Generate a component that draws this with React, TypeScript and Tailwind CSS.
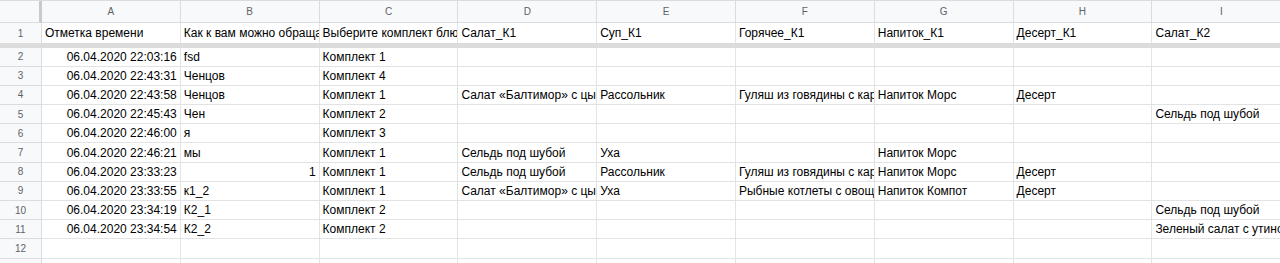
const columns = ['A', 'B', 'C', 'D', 'E', 'F', 'G', 'H', 'I'];

type Cell = string | { v: string; right?: boolean };

const header: Cell[] = [
  'Отметка времени',
  'Как к вам можно обращаться?',
  'Выберите комплект блюд',
  'Салат_К1',
  'Суп_К1',
  'Горячее_К1',
  'Напиток_К1',
  'Десерт_К1',
  'Салат_К2',
];

const ts = (v: string) => ({ v, right: true });

const rows: Cell[][] = [
  [ts('06.04.2020 22:03:16'), 'fsd', 'Комплект 1'],
  [ts('06.04.2020 22:43:31'), 'Ченцов', 'Комплект 4'],
  [
    ts('06.04.2020 22:43:58'),
    'Ченцов',
    'Комплект 1',
    'Салат «Балтимор» с цыпленком',
    'Рассольник',
    'Гуляш из говядины с картофелем',
    'Напиток Морс',
    'Десерт',
  ],
  [ts('06.04.2020 22:45:43'), 'Чен', 'Комплект 2', '', '', '', '', '', 'Сельдь под шубой'],
  [ts('06.04.2020 22:46:00'), 'я', 'Комплект 3'],
  [ts('06.04.2020 22:46:21'), 'мы', 'Комплект 1', 'Сельдь под шубой', 'Уха', '', 'Напиток Морс'],
  [
    ts('06.04.2020 23:33:23'),
    ts('1'),
    'Комплект 1',
    'Сельдь под шубой',
    'Рассольник',
    'Гуляш из говядины с картофелем',
    'Напиток Морс',
    'Десерт',
  ],
  [
    ts('06.04.2020 23:33:55'),
    'к1_2',
    'Комплект 1',
    'Салат «Балтимор» с цыпленком',
    'Уха',
    'Рыбные котлеты с овощами',
    'Напиток Компот',
    'Десерт',
  ],
  [ts('06.04.2020 23:34:19'), 'К2_1', 'Комплект 2', '', '', '', '', '', 'Сельдь под шубой'],
  [ts('06.04.2020 23:34:54'), 'К2_2', 'Комплект 2', '', '', '', '', '', 'Зеленый салат с утиной грудкой'],
  [],
  [],
];

function DataCell({ cell, h }: { cell?: Cell; h: string }) {
  const value = typeof cell === 'string' ? cell : cell?.v ?? '';
  const right = typeof cell === 'object' && cell?.right;
  return (
    <div
      className={`w-[138.8px] shrink-0 ${h} border-r border-b border-[#e2e3e3] px-[3px] flex items-center overflow-hidden whitespace-nowrap text-black ${
        right ? 'justify-end' : ''
      }`}
    >
      {value}
    </div>
  );
}

export default function App() {
  return (
    <div className="w-[1280px] h-[263px] overflow-hidden bg-white font-['Liberation_Sans',Arial,sans-serif] text-[12px] border-t border-[#dadce0]">
      {/* Column letters */}
      <div className="flex h-[22px] bg-[#f8f9fa]">
        <div className="w-[42px] shrink-0 border-r-[3px] border-b border-[#c8cacd] border-b-[#dadce0]" />
        {columns.map((c) => (
          <div
            key={c}
            className="w-[138.8px] shrink-0 border-r border-b border-[#dadce0] flex items-center justify-center text-[10px] text-[#5f6368]"
          >
            {c}
          </div>
        ))}
      </div>

      {/* Frozen row 1 */}
      <div className="flex">
        <div className="w-[42px] shrink-0 h-[20px] bg-[#f8f9fa] border-r border-[#dadce0] flex items-center justify-center text-[10px] text-[#5f6368]">
          1
        </div>
        {header.map((h, i) => (
          <div
            key={i}
            className="w-[138.8px] shrink-0 h-[20px] border-r border-[#e2e3e3] px-[3px] flex items-center overflow-hidden whitespace-nowrap text-black"
          >
            {h as string}
          </div>
        ))}
      </div>
      <div className="h-[4.5px] bg-[#dcdcdc]" />

      {/* Data rows */}
      {rows.map((r, ri) => (
        <div key={ri} className="flex">
          <div className="w-[42px] shrink-0 h-[19.2px] bg-[#f8f9fa] border-r border-b border-[#dadce0] flex items-center justify-center text-[10px] text-[#5f6368]">
            {ri + 2}
          </div>
          {columns.map((_, ci) => (
            <DataCell key={ci} cell={r[ci]} h="h-[19.2px]" />
          ))}
        </div>
      ))}
    </div>
  );
}
